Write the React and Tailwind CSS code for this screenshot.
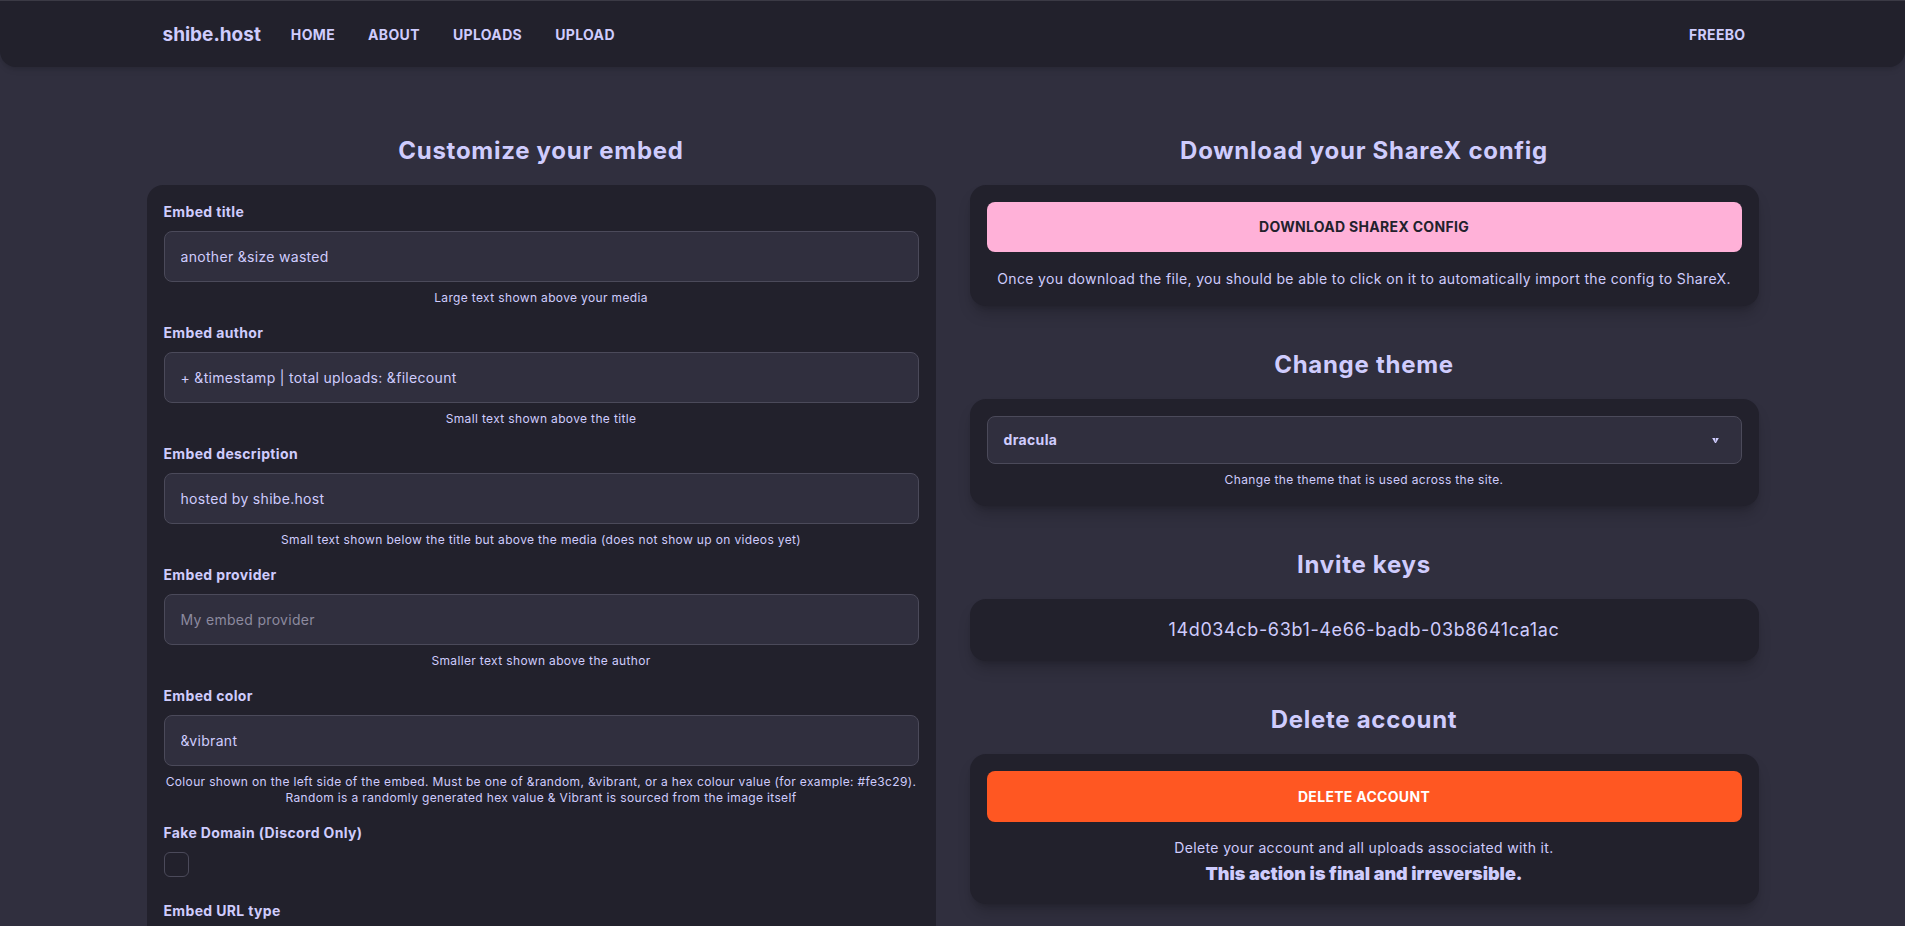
import { useState } from 'react'

const fields = [
  {
    label: 'Embed title',
    value: 'another &size wasted',
    help: ['Large text shown above your media'],
  },
  {
    label: 'Embed author',
    value: '+ &timestamp | total uploads: &filecount',
    help: ['Small text shown above the title'],
  },
  {
    label: 'Embed description',
    value: 'hosted by shibe.host',
    help: ['Small text shown below the title but above the media (does not show up on videos yet)'],
  },
  {
    label: 'Embed provider',
    value: '',
    placeholder: 'My embed provider',
    help: ['Smaller text shown above the author'],
  },
  {
    label: 'Embed color',
    value: '&vibrant',
    help: [
      'Colour shown on the left side of the embed. Must be one of &random, &vibrant, or a hex colour value (for example: #fe3c29).',
      'Random is a randomly generated hex value & Vibrant is sourced from the image itself',
    ],
  },
]

const navLinks = ['HOME', 'ABOUT', 'UPLOADS', 'UPLOAD']

const Caret = () => (
  <svg width="7" height="5" viewBox="0 0 8 6" className="fill-current">
    <path d="M0 0h3.6v1.2L4 5 4.4 1.2V0H8L4.6 6H3.4z" />
  </svg>
)

const Section = ({ title, children }) => (
  <section>
    <h2 className="text-2xl leading-8 font-bold tracking-[0.03em] text-center mb-[18px]">{title}</h2>
    <div className="bg-[#22212c] rounded-2xl shadow-lg shadow-black/20">{children}</div>
  </section>
)

const App = () => {
  const [form, setForm] = useState(() => fields.map(f => f.value))
  const [fakeDomain, setFakeDomain] = useState(false)

  return (
    <div className="min-h-screen bg-[#302f3e] text-[#cfccfd] tracking-[0.022em] font-[Inter,'Liberation_Sans',sans-serif]">
      <nav className="h-[67px] bg-[#22212c] rounded-b-2xl border-t border-[#3b3a45] shadow-md shadow-black/10">
        <div className="max-w-[1612px] mx-auto h-full flex items-center pt-[2px] pl-[16px] pr-[13px]">
          <a className="text-[19px] font-bold tracking-normal mr-[30px]">shibe.host</a>
          <div className="flex items-center gap-[33px]">
            {navLinks.map(link => (
              <a key={link} className="text-sm font-bold">{link}</a>
            ))}
          </div>
          <a className="ml-auto text-sm font-bold">FREEBO</a>
        </div>
      </nav>

      <main className="max-w-[1612px] mx-auto grid grid-cols-2 gap-[34px] pt-[68px] pb-10">
        <section>
          <h2 className="text-2xl leading-8 font-bold tracking-[0.03em] text-center mb-[18px]">Customize your embed</h2>
          <div className="bg-[#22212c] rounded-2xl px-[17px] pt-[17px] pb-6">
            {fields.map((field, i) => (
              <div key={field.label} className={i > 0 ? 'mt-[17px]' : ''}>
                <label className="block text-sm leading-5 font-bold">{field.label}</label>
                <input
                  value={form[i]}
                  placeholder={field.placeholder}
                  onChange={e => setForm(form.map((v, j) => (j === i ? e.target.value : v)))}
                  className="mt-[9px] w-full h-[51px] rounded-lg border border-[#4b4a5a] bg-[#302f3e] px-4 text-sm tracking-[0.022em] text-[#cfccfd] placeholder:text-[#8c8a9f] outline-none"
                />
                <div className="mt-2 text-xs leading-4 text-center">
                  {field.help.map(line => (
                    <p key={line}>{line}</p>
                  ))}
                </div>
              </div>
            ))}

            <div className="mt-[17px]">
              <label className="block text-sm leading-5 font-bold">Fake Domain (Discord Only)</label>
              <button
                onClick={() => setFakeDomain(!fakeDomain)}
                className={`mt-[9px] block w-[25px] h-[25px] rounded-md border border-[#4b4a5a] ${fakeDomain ? 'bg-[#ffb1d8]' : 'bg-transparent'}`}
              />
            </div>

            <div className="mt-6">
              <label className="block text-sm leading-5 font-bold">Embed URL type</label>
              <div className="mt-[9px] h-[48px] rounded-lg border border-[#4b4a5a] bg-[#302f3e] pl-4 pr-[22px] flex items-center justify-between">
                <span className="text-sm font-bold">Normal</span>
                <Caret />
              </div>
              <p className="mt-2 text-xs leading-4 text-center">The type of URL returned after uploading</p>
            </div>
          </div>
        </section>

        <div className="flex flex-col gap-[43px]">
          <Section title="Download your ShareX config">
            <div className="p-[17px]">
              <button className="w-full h-[50px] rounded-lg bg-[#ffb1d8] text-[#22212c] text-sm font-bold tracking-[0.022em]">
                DOWNLOAD SHAREX CONFIG
              </button>
              <p className="mt-[17px] text-sm leading-5 text-center">
                Once you download the file, you should be able to click on it to automatically import the config to ShareX.
              </p>
            </div>
          </Section>

          <Section title="Change theme">
            <div className="px-[17px] pt-[17px] pb-[18px]">
              <div className="h-[48px] rounded-lg border border-[#4b4a5a] bg-[#302f3e] pl-4 pr-[22px] flex items-center justify-between">
                <span className="text-sm font-bold">dracula</span>
                <Caret />
              </div>
              <p className="mt-2 text-xs leading-4 text-center">Change the theme that is used across the site.</p>
            </div>
          </Section>

          <Section title="Invite keys">
            <div className="py-[17px] text-lg leading-7 tracking-[0.035em] text-center">14d034cb-63b1-4e66-badb-03b8641ca1ac</div>
          </Section>

          <Section title="Delete account">
            <div className="p-[17px] pb-4">
              <button className="w-full h-[51px] rounded-lg bg-[#ff5722] text-white text-sm font-bold tracking-[0.022em]">
                DELETE ACCOUNT
              </button>
              <p className="mt-4 text-sm leading-5 text-center">Delete your account and all uploads associated with it.</p>
              <p className="mt-0.5 text-lg leading-7 font-black tracking-normal text-center">
                This action is final and irreversible.
              </p>
            </div>
          </Section>
        </div>
      </main>
    </div>
  )
}

export default App
